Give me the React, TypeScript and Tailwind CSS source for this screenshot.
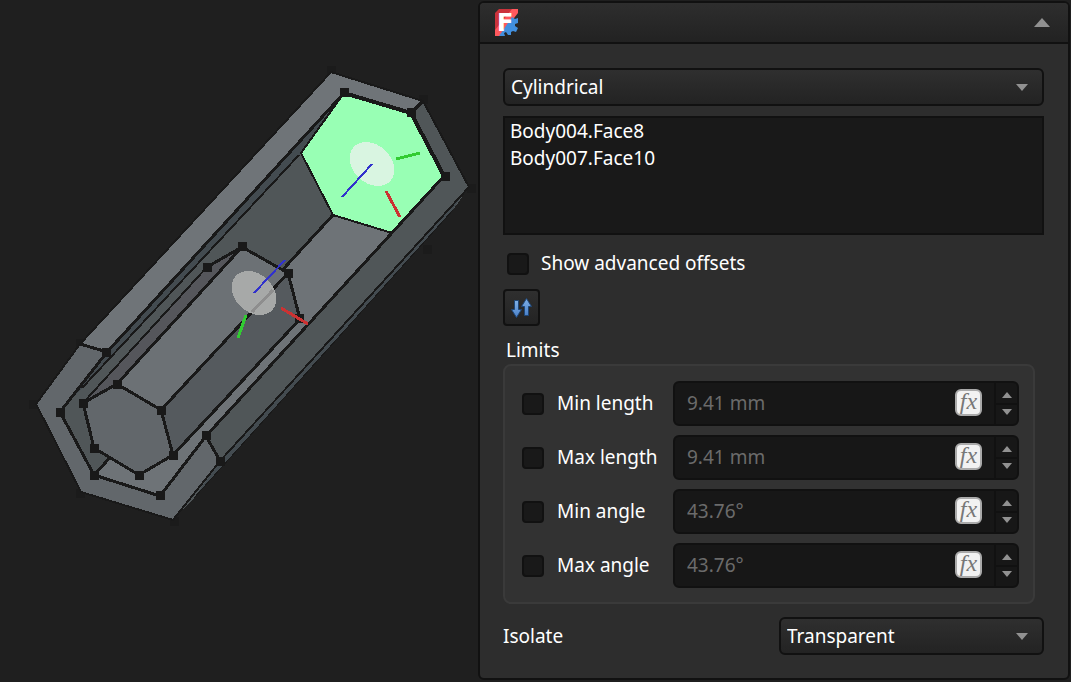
import React, { useState } from 'react';

interface Limit {
  id: string;
  label: string;
  value: string;
}

const LIMITS: Limit[] = [
  { id: 'min-length', label: 'Min length', value: '9.41 mm' },
  { id: 'max-length', label: 'Max length', value: '9.41 mm' },
  { id: 'min-angle', label: 'Min angle', value: '43.76°' },
  { id: 'max-angle', label: 'Max angle', value: '43.76°' },
];

const REFERENCES = ['Body004.Face8', 'Body007.Face10'];

// Corner markers, drawn as small squares on top of the edges
const OUTER_VERTICES = [
  [331, 70], [423, 99], [471, 188], [427, 249], [80, 343], [33, 404], [80, 493], [174, 521],
];

const INNER_VERTICES = [
  [344, 92], [411, 112], [445, 176], [106, 352], [60, 412], [94, 475], [160, 495], [206, 435],
  [220, 461], [242, 246], [207, 267], [288, 273], [299, 318], [117, 384], [161, 410], [173, 455],
  [139, 475], [94, 448], [83, 403],
];

const Viewport: React.FC = () => (
  <svg viewBox="0 0 478 682" className="block h-auto w-full" role="img" aria-label="3D view">
    <g shapeRendering="crispEdges" strokeLinejoin="round">
      <g fill="#1b1b1b">
        {OUTER_VERTICES.map(([x, y]) => (
          <rect key={`${x}-${y}`} x={x - 4} y={y - 4} width="9" height="9" />
        ))}
      </g>

      {/* outer body */}
      <polygon points="331,72 423,101 469,187 453,210 194,498 173,520 81,492 36,404 80,344" fill="#505658" />
      <polygon points="462,195 453,210 194,498 220,461" fill="#434b50" />
      <polygon points="331,72 423,101 411,113 344,93 107,352 80,344" fill="#6f7478" />
      <polygon points="344,93 301,153 82,388 60,412 107,352" fill="#434b50" />
      <polygon points="333,215 392,232 206,436 160,496 94,475" fill="#6e7377" />
      <polygon
        points="80,344 36,404 81,492 173,520 220,461 206,436 160,496 94,475 60,412 107,352"
        fill="#62676b"
      />
      <polygon points="344,95 411,114 443,176 392,233 333,216 301,153" fill="#98ffb4" />

      <g fill="none" stroke="#191919" strokeWidth="2">
        <path d="M80 344 331 72 423 101 469 187 220 461 173 520 81 492 36 404Z" />
        <path d="M453 210 194 498M424 101 411 113" strokeWidth="1" />
        <path d="M299 155 82 388M344 93 301 153" />
        <path d="M301 153 333 215 392 233" />
        <path d="M333 215 94 475" strokeWidth="3" />
        <path d="M423 101 411 113M444 176 206 436 220 461" strokeWidth="3" />
        <path d="M344 93 107 352" strokeWidth="3" />
        <path d="M344 93 411 113 444 176" strokeWidth="4" />
        <path d="M80 344 107 352 60 412 94 475 160 496 206 436" strokeWidth="3" />
      </g>

      {/* inner body */}
      <polygon points="207,267 242,247 117,384 83,403" fill="#55565b" />
      <polygon points="242,247 288,273 161,410 117,384" fill="#6c7175" />
      <polygon points="288,273 300,319 173,455 161,410" fill="#555a5e" />
      <polygon points="117,384 161,410 173,455 139,475 94,448 83,403" fill="#62676b" />
      <g fill="none" stroke="#191919" strokeWidth="3">
        <path d="M207 267 83 403" strokeWidth="2" />
        <path d="M242 247 117 384M288 273 161 410M300 319 173 455" />
        <path d="M207 267 242 247 288 273 300 319" />
        <path d="M117 384 161 410 173 455 139 475 94 448 83 403Z" />
      </g>

      <g fill="#191919">
        {INNER_VERTICES.map(([x, y]) => (
          <rect key={`${x}-${y}`} x={x - 4} y={y - 4} width="9" height="9" />
        ))}
      </g>

      {/* joint coordinate systems */}
      <ellipse cx="372" cy="164" rx="25" ry="19" transform="rotate(43 372 164)" fill="#d9f5e1" />
      <ellipse cx="254" cy="293" rx="25" ry="19" transform="rotate(43 254 293)" fill="#a7a9a8" />
      <path d="M252 312 273 290" stroke="#8e8e8e" strokeWidth="3" />
      <g fill="none" strokeWidth="2">
        <path d="M342 197 372 164M254 293 285 260" stroke="#3232cc" />
        <path d="M396 159 420 153" stroke="#32cc32" strokeWidth="3" />
        <path d="M246 315 238 338" stroke="#32cc32" strokeWidth="3" />
        <path d="M386 191 400 217M281 308 308 324" stroke="#cc3232" strokeWidth="3" />
      </g>
    </g>
  </svg>
);

const AppLogo: React.FC = () => (
  <svg viewBox="0 0 24 27" className="h-[27px] w-6 overflow-visible" role="img" aria-label="FreeCAD">
    <path d="M4 0H18L0 22V4Z" fill="#cb333b" />
    <path d="M17 0H23V4L5 27H0V21Z" fill="#ff585d" />
    <path
      d="M4 27 17 8 20 10 23 9 23 14 20 15 20 17 23 19 21 23 18 22 16 23 16 26 13 26 11 23 9 24 10 27Z"
      fill="#418fde"
    />
    <text x="2" y="22" fontFamily="DejaVu Sans, sans-serif" fontSize="24" fontWeight="700" fill="#fff">
      F
    </text>
  </svg>
);

const SwapIcon: React.FC = () => (
  <svg viewBox="0 0 22 20" className="h-5 w-[22px]" aria-hidden="true">
    <defs>
      <linearGradient id="arrow" x1="0" y1="0" x2="0" y2="1">
        <stop offset="0" stopColor="#7fb0e6" />
        <stop offset="1" stopColor="#4a80c8" />
      </linearGradient>
    </defs>
    <g fill="url(#arrow)" stroke="#1d4678" strokeWidth="1">
      <path d="M3.5 2.5H7.5V11.5H10.5L5.5 19.5 .5 11.5H3.5Z" />
      <path d="M13.5 17.5H17.5V8.5H20.5L15.5 .5 10.5 8.5H13.5Z" />
    </g>
  </svg>
);

const Arrow: React.FC<{ up?: boolean; className: string }> = ({ up, className }) => (
  <svg viewBox="0 0 12 6" preserveAspectRatio="none" className={className} aria-hidden="true">
    <path d={up ? 'M0 6 6 0 12 6Z' : 'M0 0 12 0 6 6Z'} fill="#919191" />
  </svg>
);

interface DropDownProps {
  id: string;
  label: string;
  options: string[];
}

const DropDown: React.FC<DropDownProps> = ({ id, label, options }) => (
  <div className="relative">
    <select
      id={id}
      aria-label={label}
      className="block h-[38px] w-full appearance-none rounded-md border-2 border-[#111] bg-linear-to-b from-[#2f2f2f] to-[#232323] px-1.5 text-white"
    >
      {options.map((option) => (
        <option key={option}>{option}</option>
      ))}
    </select>
    <Arrow className="pointer-events-none absolute top-4 right-4 h-[7px] w-3" />
  </div>
);

const CHECKBOX =
  'size-[22px] shrink-0 appearance-none rounded border-2 border-[#111] bg-[#191919] checked:bg-[#418fde]';

const LimitRow: React.FC<{ limit: Limit }> = ({ limit }) => {
  const [enabled, setEnabled] = useState(false);

  return (
    <div className="flex items-center">
      <label className="flex w-[151px] shrink-0 items-center gap-[13px]">
        <input
          type="checkbox"
          className={CHECKBOX}
          checked={enabled}
          onChange={(e) => setEnabled(e.target.checked)}
        />
        {limit.label}
      </label>
      <div className="flex h-[45px] min-w-0 flex-1 items-stretch overflow-hidden rounded-md border-2 border-[#111] bg-[#171717]">
        <input
          type="text"
          aria-label={`${limit.label} value`}
          defaultValue={limit.value}
          disabled={!enabled}
          className="w-0 flex-1 bg-transparent pl-3 text-white disabled:text-[#6b6b6b]"
        />
        <button
          type="button"
          aria-label="Edit expression"
          className="mt-1.5 mr-3 flex size-[27px] items-center justify-center rounded-md border-2 border-[#aaa] bg-[#f2f2f2] pb-1 font-['Liberation_Serif',serif] text-2xl leading-none text-[#777] italic"
        >
          fx
        </button>
        <div className="flex w-[23px] flex-col border-l-2 border-[#111]">
          <button
            type="button"
            aria-label="Increase"
            className="flex flex-1 items-center justify-center border-b-2 border-[#111] pt-1"
          >
            <Arrow up className="h-[6px] w-[10px]" />
          </button>
          <button
            type="button"
            aria-label="Decrease"
            className="flex flex-1 items-center justify-center pb-1"
          >
            <Arrow className="h-[6px] w-[10px]" />
          </button>
        </div>
      </div>
    </div>
  );
};

const JointPanel: React.FC = () => (
  <section className="mt-px mr-px mb-0.5 flex flex-col rounded-md border-2 border-[#111] bg-[#2d2d2d]">
    <header className="flex h-[41px] items-center justify-between rounded-t border-b-2 border-[#111] bg-linear-to-b from-[#2e2e2e] to-[#222] pr-[18px] pl-[15px]">
      <AppLogo />
      <button type="button" aria-label="Collapse" className="py-2">
        <Arrow up className="h-[9px] w-4" />
      </button>
    </header>

    <form className="flex flex-col pt-6 pr-6 pl-[23px]">
      <DropDown id="joint-type" label="Joint type" options={['Cylindrical']} />

      <ul className="mt-2.5 h-[119px] overflow-auto border-2 border-[#111] bg-[#191919] px-[5px]">
        {REFERENCES.map((name) => (
          <li key={name} className="leading-[27px]">
            {name}
          </li>
        ))}
      </ul>

      <label className="mt-[15px] flex items-center gap-3 pl-1">
        <input type="checkbox" className={CHECKBOX} />
        Show advanced offsets
      </label>

      <button
        type="button"
        aria-label="Reverse direction"
        className="mt-3 flex size-[37px] items-center justify-center rounded border-2 border-[#111] bg-linear-to-b from-[#2f2f2f] to-[#232323]"
      >
        <SwapIcon />
      </button>

      <fieldset className="mt-[11px] min-w-0">
        <legend className="px-[3px]">Limits</legend>
        <div className="mr-[9px] flex flex-col gap-[9px] rounded-lg border-2 border-[#3a3a3a] bg-[#323232] px-[14px] pt-[15px] pb-[14px] pl-[17px]">
          {LIMITS.map((limit) => (
            <LimitRow key={limit.id} limit={limit} />
          ))}
        </div>
      </fieldset>

      <div className="mt-[13px] flex items-center justify-between">
        <label htmlFor="isolate">Isolate</label>
        <div className="w-[49%]">
          <DropDown id="isolate" label="Isolate" options={['Transparent']} />
        </div>
      </div>
    </form>
  </section>
);

const App: React.FC = () => (
  <div className="grid min-h-screen grid-cols-[minmax(0,478fr)_minmax(0,593fr)] bg-[#1f1f1f] font-['Noto_Sans',sans-serif] text-[19px] leading-[27px] text-white">
    <Viewport />
    <JointPanel />
  </div>
);

export default App;
